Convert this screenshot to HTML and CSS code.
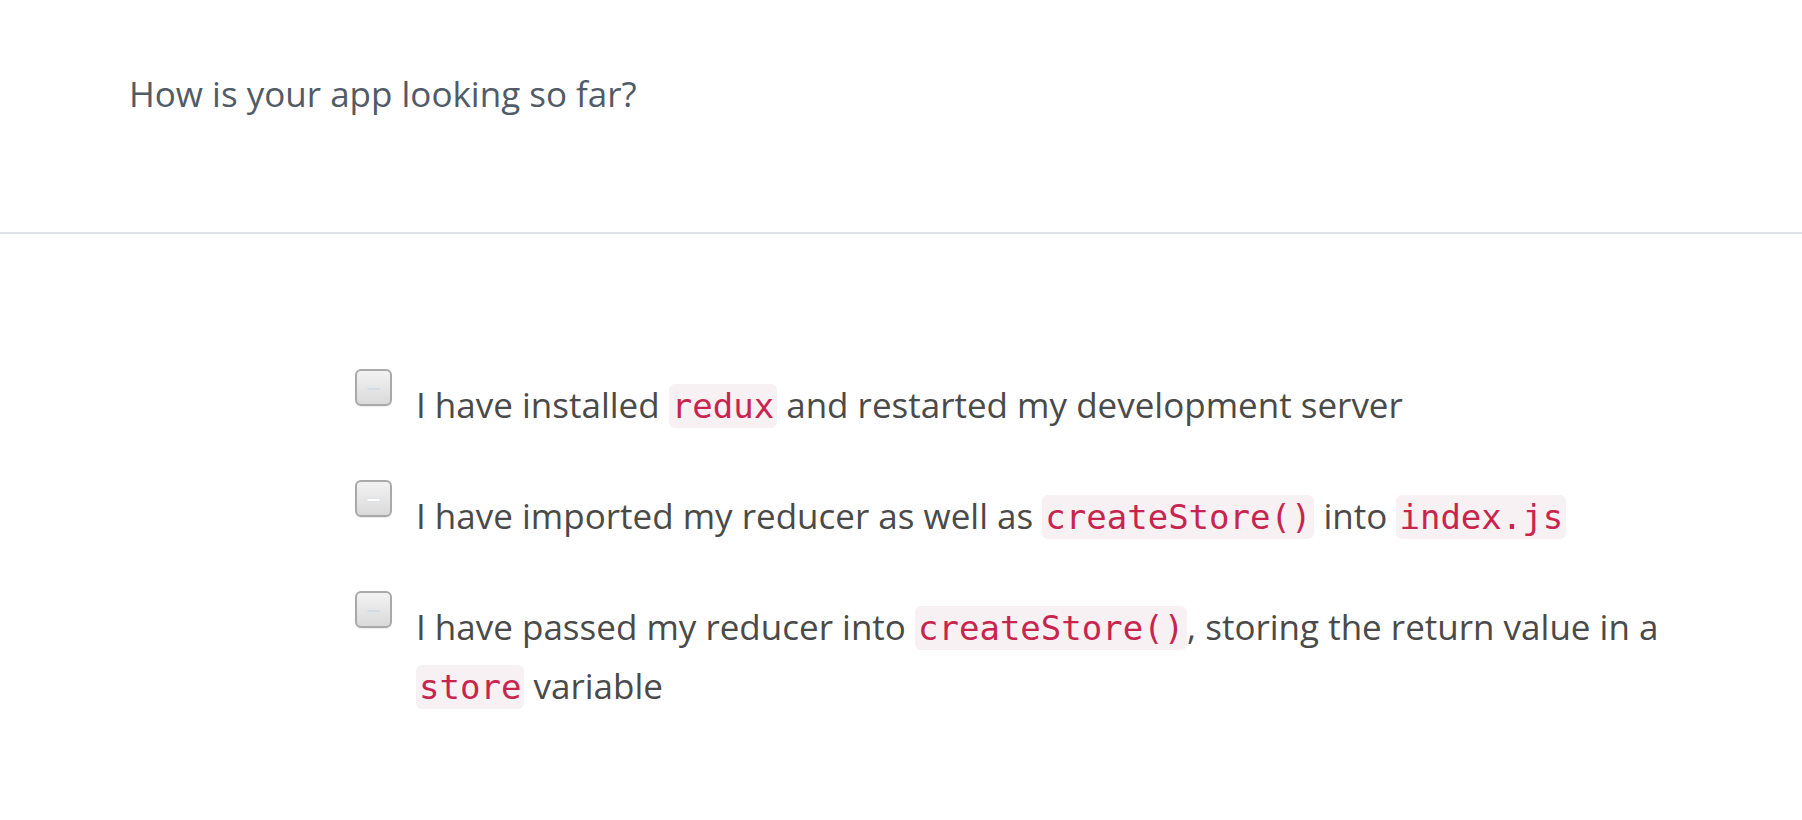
FILE: index.html
```html
<!DOCTYPE html>
<html>
<head>
<meta charset="utf-8">
<link rel="stylesheet" href="styles.css">
</head>
<body>
<header class="top">
  <p class="question">How is your app looking so far?</p>
</header>
<main class="checklist">
  <div class="item">
    <span class="box dim"></span>
    <p class="label">I have installed <code>redux</code> and restarted my development server</p>
  </div>
  <div class="item">
    <span class="box bright"></span>
    <p class="label">I have imported my reducer as well as <code>createStore()</code> into <code>index.js</code></p>
  </div>
  <div class="item">
    <span class="box dim"></span>
    <p class="label">I have passed my reducer into <code>createStore()</code>, storing the return value in a <code>store</code> variable</p>
  </div>
</main>
</body>
</html>
```
FILE: styles.css
```css
html, body {
  margin: 0;
  padding: 0;
  background: #ffffff;
}
body {
  font-family: "Open Sans", "Liberation Sans", sans-serif;
}
.top {
  height: 234px;
  box-sizing: border-box;
  padding: 70px 0 0 129px;
  border-bottom: 2px solid #dfe3e7;
}
.question {
  margin: 0;
  font-size: 35px;
  line-height: 48px;
  color: #515b67;
}
.checklist {
  padding: 135px 0 0 355px;
  display: flex;
  flex-direction: column;
  gap: 45px;
}
.item {
  display: flex;
  align-items: flex-start;
}
.box {
  flex: none;
  width: 33px;
  height: 33px;
  border: 2px solid #a9a9a9;
  border-radius: 6px;
  background: linear-gradient(#f2f2f2, #dadada);
  box-shadow: 0 1px 1px rgba(0,0,0,0.08);
  position: relative;
}
.box::after {
  content: "";
  position: absolute;
  left: 10px;
  top: 17px;
  width: 13px;
  height: 2px;
  border-radius: 1px;
}
.box.dim::after {
  background: #d3dde6;
}
.box.bright::after {
  background: #ffffff;
  box-shadow: 0 0 1px #9cc0e6;
}
.label {
  margin: 7px 0 0 24px;
  width: 1284px;
  font-size: 35px;
  line-height: 57px;
  color: #4a4a4a;
}
code {
  font-family: "DejaVu Sans Mono", "Liberation Mono", monospace;
  font-size: 34px;
  color: #c7254e;
  background: #f8f1f4;
  border-radius: 6px;
  padding: 2px 3px;
}
```
